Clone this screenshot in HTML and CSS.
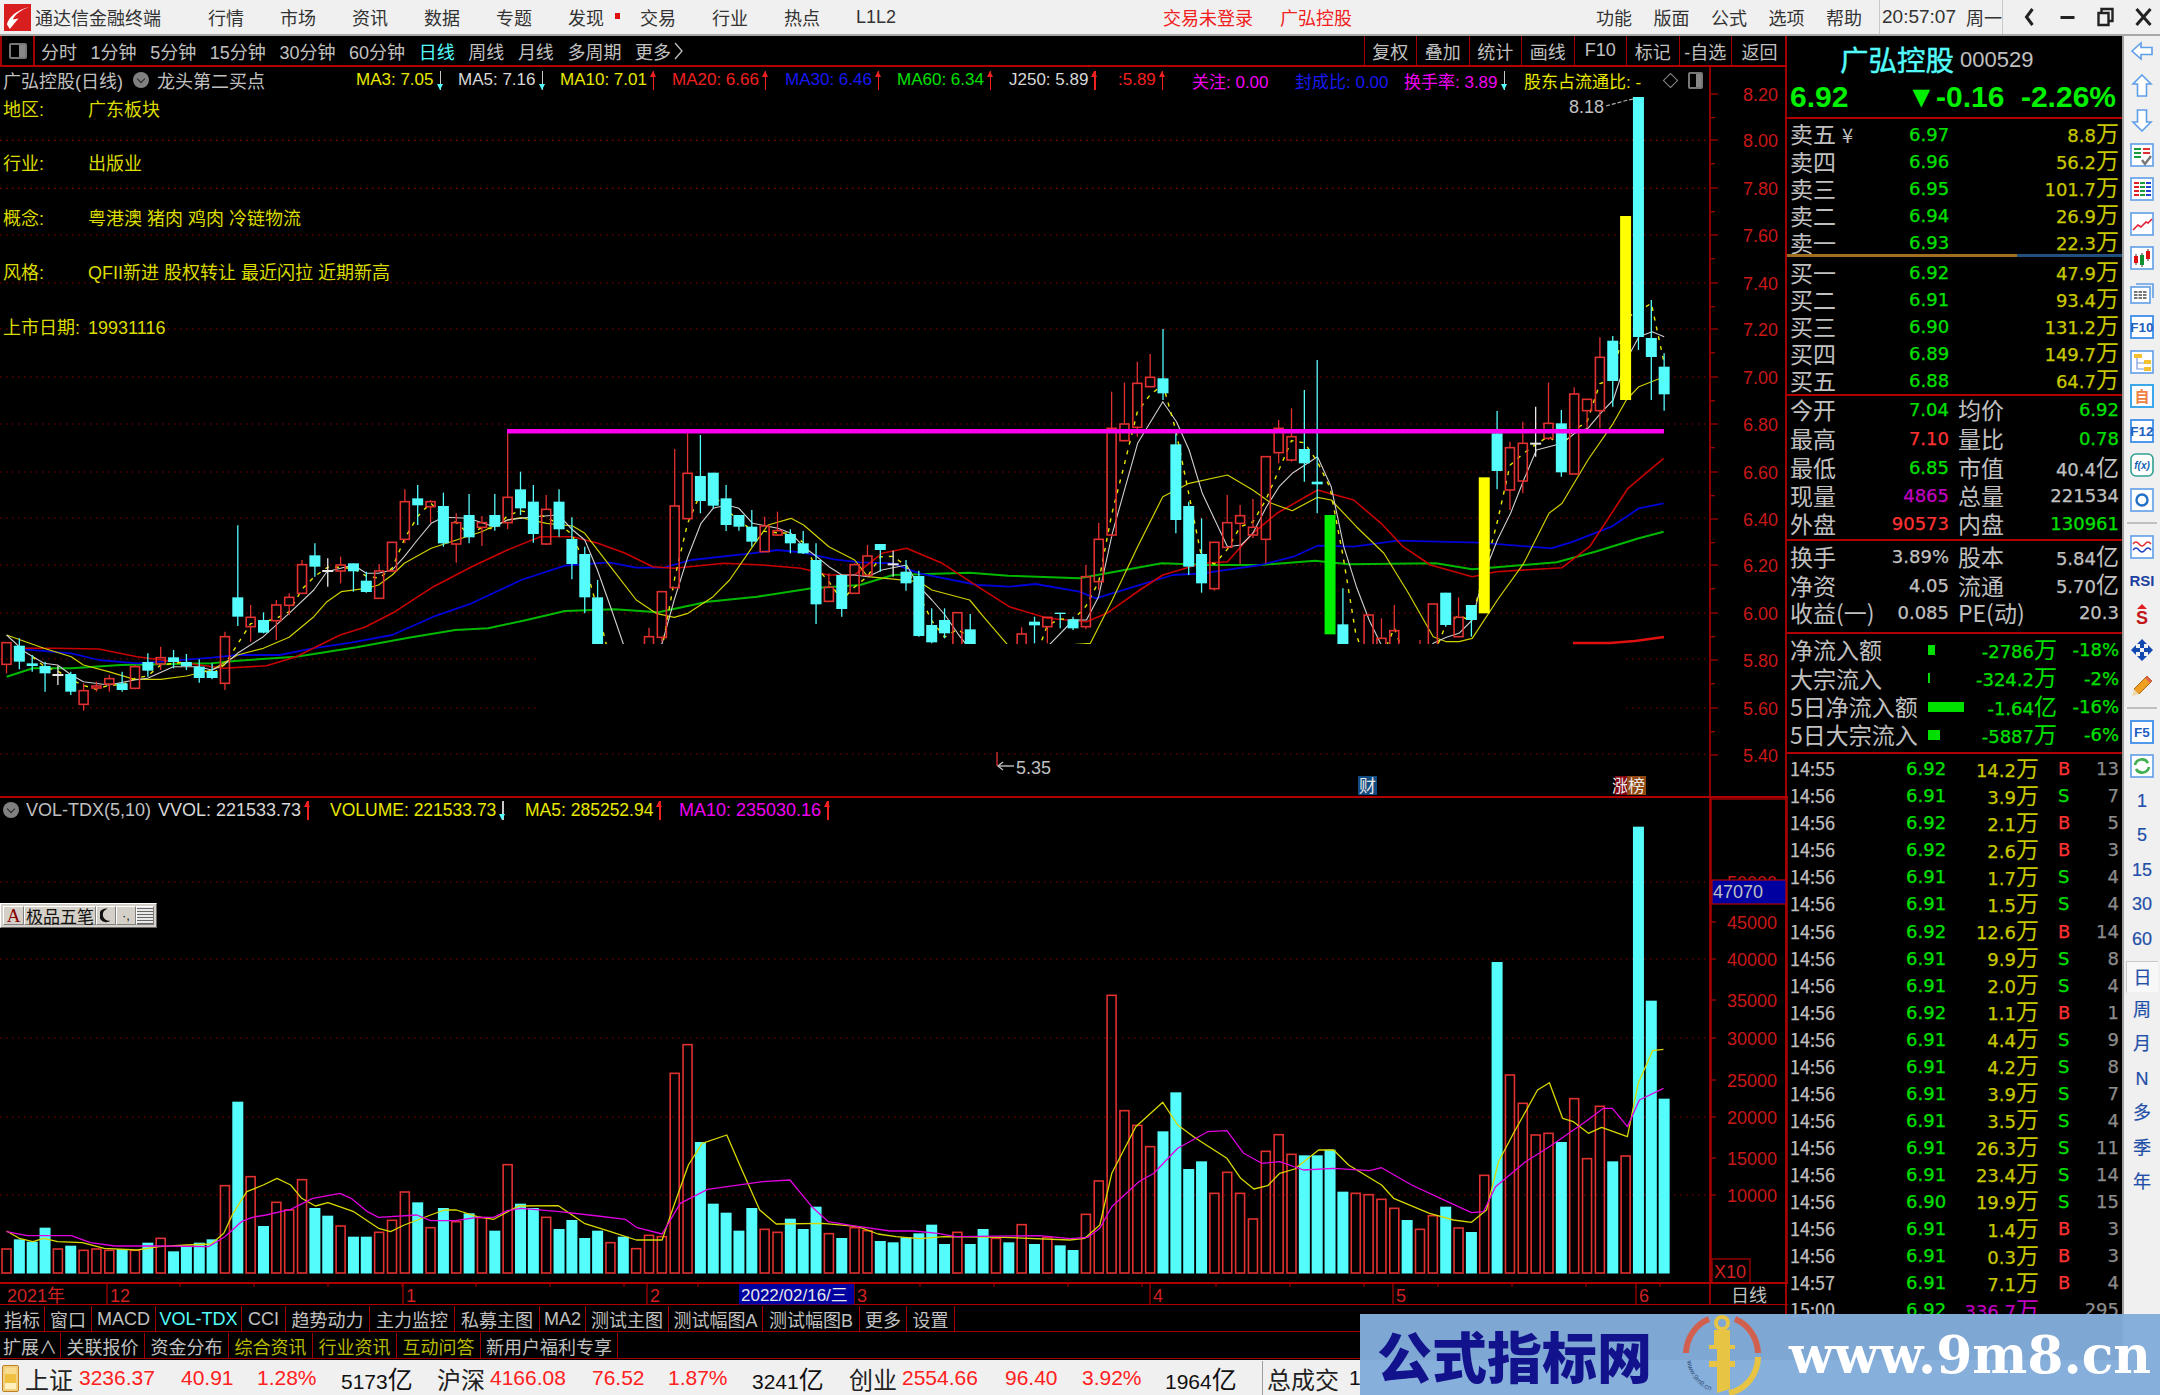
FILE: index.html
```html
<!DOCTYPE html>
<html lang="zh-CN">
<head>
<meta charset="utf-8">
<title>通达信金融终端</title>
<link rel="stylesheet" href="styles.css">
</head>
<body>
<div class="app">
  <header class="titlebar">
    <svg class="logo" viewBox="0 0 28 28"><rect width="28" height="28" fill="#d81e1e"/><path d="M26 3 C18 6 12 10 9 16 L15 15 L6 26 L3 21 C5 13 14 6 26 3 Z" fill="#fff"/></svg>
    <span class="app-name">通达信金融终端</span>
    <nav class="menu">
      <span>行情</span><span>市场</span><span>资讯</span><span>数据</span><span>专题</span>
      <span class="has-dot">发现<i class="dot"></i></span><span>交易</span><span>行业</span><span>热点</span><span>L1L2</span>
    </nav>
    <span class="login">交易未登录</span>
    <span class="login-name">广弘控股</span>
    <nav class="menu-right"><span>功能</span><span>版面</span><span>公式</span><span>选项</span><span>帮助</span></nav>
    <div class="clock"><span>20:57:07</span><span class="week">周一</span></div>
    <div class="winbtns">
      <svg viewBox="0 0 18 20"><path d="M12 2 L6 10 L12 18" fill="none" stroke="#222" stroke-width="3"/></svg>
      <svg viewBox="0 0 18 20"><rect x="2" y="9" width="14" height="3" fill="#222"/></svg>
      <svg viewBox="0 0 18 20"><path d="M5 5 V2 H16 V14 H13 M2 6 H12 V18 H2 Z" fill="none" stroke="#222" stroke-width="2.4"/></svg>
      <svg viewBox="0 0 18 20"><path d="M2 2 L16 18 M16 2 L2 18" fill="none" stroke="#222" stroke-width="3"/></svg>
    </div>
  </header>

  <div class="workspace">
    <section class="chart-col">
      <div class="toolbar">
        <div class="tb-corner"><i></i></div>
        <div class="periods">
          <span>分时</span><span>1分钟</span><span>5分钟</span><span>15分钟</span><span>30分钟</span><span>60分钟</span>
          <span class="on">日线</span><span>周线</span><span>月线</span><span>多周期</span>
          <span class="more">更多<svg viewBox="0 0 9 18"><path d="M1 1 L8 9 L1 17" fill="none" stroke="#c0c0c0" stroke-width="1.3"/></svg></span>
        </div>
        <div class="tb-actions"><span>复权</span><span>叠加</span><span>统计</span><span>画线</span><span>F10</span><span>标记</span><span>-自选</span><span>返回</span></div>
      </div>

      <div class="chart-area">
        <svg id="chart" class="chart-svg" viewBox="0 67 1788 1238" width="1788" height="1238"></svg>
        <div class="pane-price">
          <div class="legend legend-price">
            <span class="gray">广弘控股(日线)</span><i class="drop"></i><span class="gray">龙头第二买点</span>
            <span class="yel">MA3: 7.05<b class="dn"></b></span>
            <span class="wht">MA5: 7.16<b class="dn"></b></span>
            <span class="yel">MA10: 7.01<b class="up"></b></span>
            <span class="red">MA20: 6.66<b class="up"></b></span>
            <span class="blu">MA30: 6.46<b class="up"></b></span>
            <span class="grn">MA60: 6.34<b class="up"></b></span>
            <span class="wht">J250: 5.89<b class="up"></b></span>
            <span class="red">:5.89<b class="up"></b></span>
            <span class="mag">关注: 0.00</span>
            <span class="blu">封成比: 0.00</span>
            <span class="mag">换手率: 3.89<b class="dn"></b></span>
            <span class="yel">股东占流通比: -</span>
            <i class="diamond"></i><i class="mini-square"></i>
          </div>
          <dl class="stock-info">
            <dt>地区:</dt><dd>广东板块</dd>
            <dt>行业:</dt><dd>出版业</dd>
            <dt>概念:</dt><dd>粤港澳 猪肉 鸡肉 冷链物流</dd>
            <dt>风格:</dt><dd>QFII新进 股权转让 最近闪拉 近期新高</dd>
            <dt>上市日期:</dt><dd>19931116</dd>
          </dl>
        </div>
        <div class="pane-vol">
          <div class="legend legend-vol">
            <i class="drop"></i>
            <span class="gray">VOL-TDX(5,10)</span>
            <span class="wht">VVOL: 221533.73<b class="up"></b></span>
            <span class="yel">VOLUME: 221533.73<b class="dn"></b></span>
            <span class="yel">MA5: 285252.94<b class="up"></b></span>
            <span class="mag">MA10: 235030.16<b class="up"></b></span>
          </div>
          <div class="ime">
            <span class="ime-a">A</span><span class="ime-name">极品五笔</span>
            <span class="ime-btn"><svg viewBox="0 0 14 18"><path d="M9 1 A8 8 0 1 0 12 15 A7 7 0 0 1 9 1Z" fill="#111"/></svg></span>
            <span class="ime-btn ime-punct">·,</span>
            <span class="ime-kbd"></span>
          </div>
        </div>
      </div>

      <div class="tabs tabs-one">
        <span>指标</span><span>窗口</span><span>MACD</span><span class="cy">VOL-TDX</span><span>CCI</span><span>趋势动力</span><span>主力监控</span><span>私募主图</span><span>MA2</span><span>测试主图</span><span>测试幅图A</span><span>测试幅图B</span><span>更多</span><span>设置</span>
      </div>
      <div class="tabs tabs-two">
        <span>扩展∧</span><span>关联报价</span><span>资金分布</span><span class="ol">综合资讯</span><span class="ol">行业资讯</span><span class="ol">互动问答</span><span>新用户福利专享</span>
      </div>
    </section>

    <aside class="quote">
      <div class="q-head"><span class="q-name">广弘控股</span><span class="q-code">000529</span></div>
      <div class="q-price"><span>6.92</span><span class="q-chg">▼-0.16</span><span class="q-pct">-2.26%</span></div>

      <div class="book">
        <div class="b-row"><span>卖五<em>¥</em></span><span class="g">6.97</span><span class="o">8.8<i>万</i></span></div>
        <div class="b-row"><span>卖四</span><span class="g">6.96</span><span class="o">56.2<i>万</i></span></div>
        <div class="b-row"><span>卖三</span><span class="g">6.95</span><span class="o">101.7<i>万</i></span></div>
        <div class="b-row"><span>卖二</span><span class="g">6.94</span><span class="o">26.9<i>万</i></span></div>
        <div class="b-row"><span>卖一</span><span class="g">6.93</span><span class="o">22.3<i>万</i></span></div>
      </div>
      <div class="book-ratio"></div>
      <div class="book book-buy">
        <div class="b-row"><span>买一</span><span class="g">6.92</span><span class="o">47.9<i>万</i></span></div>
        <div class="b-row"><span>买二</span><span class="g">6.91</span><span class="o">93.4<i>万</i></span></div>
        <div class="b-row"><span>买三</span><span class="g">6.90</span><span class="o">131.2<i>万</i></span></div>
        <div class="b-row"><span>买四</span><span class="g">6.89</span><span class="o">149.7<i>万</i></span></div>
        <div class="b-row"><span>买五</span><span class="g">6.88</span><span class="o">64.7<i>万</i></span></div>
      </div>

      <div class="stats stats-a">
        <div class="s-row"><span>今开</span><span class="g">7.04</span><span>均价</span><span class="g">6.92</span></div>
        <div class="s-row"><span>最高</span><span class="r">7.10</span><span>量比</span><span class="g">0.78</span></div>
        <div class="s-row"><span>最低</span><span class="g">6.85</span><span>市值</span><span>40.4<i>亿</i></span></div>
        <div class="s-row"><span>现量</span><span class="m">4865</span><span>总量</span><span>221534</span></div>
        <div class="s-row"><span>外盘</span><span class="r">90573</span><span>内盘</span><span class="g">130961</span></div>
      </div>
      <div class="stats stats-b">
        <div class="s-row"><span>换手</span><span>3.89%</span><span>股本</span><span>5.84<i>亿</i></span></div>
        <div class="s-row"><span>净资</span><span>4.05</span><span>流通</span><span>5.70<i>亿</i></span></div>
        <div class="s-row"><span>收益(一)</span><span>0.085</span><span>PE(动)</span><span>20.3</span></div>
      </div>

      <div class="flows">
        <div class="f-row"><span>净流入额</span><span class="f-cell"><b class="f-bar w7"></b></span><span class="g">-2786<i>万</i></span><span class="g">-18%</span></div>
        <div class="f-row"><span>大宗流入</span><span class="f-cell"><b class="f-bar w2"></b></span><span class="g">-324.2<i>万</i></span><span class="g">-2%</span></div>
        <div class="f-row"><span>5日净流入额</span><span class="f-cell"><b class="f-bar w36"></b></span><span class="g">-1.64<i>亿</i></span><span class="g">-16%</span></div>
        <div class="f-row"><span>5日大宗流入</span><span class="f-cell"><b class="f-bar w12"></b></span><span class="g">-5887<i>万</i></span><span class="g">-6%</span></div>
      </div>

      <div class="trades">
        <div class="t-row"><span>14:55</span><span class="g">6.92</span><span class="o">14.2<i>万</i></span><span class="r">B</span><span>13</span></div>
        <div class="t-row"><span>14:56</span><span class="g">6.91</span><span class="o">3.9<i>万</i></span><span class="g">S</span><span>7</span></div>
        <div class="t-row"><span>14:56</span><span class="g">6.92</span><span class="o">2.1<i>万</i></span><span class="r">B</span><span>5</span></div>
        <div class="t-row"><span>14:56</span><span class="g">6.92</span><span class="o">2.6<i>万</i></span><span class="r">B</span><span>3</span></div>
        <div class="t-row"><span>14:56</span><span class="g">6.91</span><span class="o">1.7<i>万</i></span><span class="g">S</span><span>4</span></div>
        <div class="t-row"><span>14:56</span><span class="g">6.91</span><span class="o">1.5<i>万</i></span><span class="g">S</span><span>4</span></div>
        <div class="t-row"><span>14:56</span><span class="g">6.92</span><span class="o">12.6<i>万</i></span><span class="r">B</span><span>14</span></div>
        <div class="t-row"><span>14:56</span><span class="g">6.91</span><span class="o">9.9<i>万</i></span><span class="g">S</span><span>8</span></div>
        <div class="t-row"><span>14:56</span><span class="g">6.91</span><span class="o">2.0<i>万</i></span><span class="g">S</span><span>4</span></div>
        <div class="t-row"><span>14:56</span><span class="g">6.92</span><span class="o">1.1<i>万</i></span><span class="r">B</span><span>1</span></div>
        <div class="t-row"><span>14:56</span><span class="g">6.91</span><span class="o">4.4<i>万</i></span><span class="g">S</span><span>9</span></div>
        <div class="t-row"><span>14:56</span><span class="g">6.91</span><span class="o">4.2<i>万</i></span><span class="g">S</span><span>8</span></div>
        <div class="t-row"><span>14:56</span><span class="g">6.91</span><span class="o">3.9<i>万</i></span><span class="g">S</span><span>7</span></div>
        <div class="t-row"><span>14:56</span><span class="g">6.91</span><span class="o">3.5<i>万</i></span><span class="g">S</span><span>4</span></div>
        <div class="t-row"><span>14:56</span><span class="g">6.91</span><span class="o">26.3<i>万</i></span><span class="g">S</span><span>11</span></div>
        <div class="t-row"><span>14:56</span><span class="g">6.91</span><span class="o">23.4<i>万</i></span><span class="g">S</span><span>14</span></div>
        <div class="t-row"><span>14:56</span><span class="g">6.90</span><span class="o">19.9<i>万</i></span><span class="g">S</span><span>15</span></div>
        <div class="t-row"><span>14:56</span><span class="g">6.91</span><span class="o">1.4<i>万</i></span><span class="r">B</span><span>3</span></div>
        <div class="t-row"><span>14:56</span><span class="g">6.91</span><span class="o">0.3<i>万</i></span><span class="r">B</span><span>3</span></div>
        <div class="t-row"><span>14:57</span><span class="g">6.91</span><span class="o">7.1<i>万</i></span><span class="r">B</span><span>4</span></div>
        <div class="t-row"><span>15:00</span><span class="g">6.92</span><span class="m">336.7<i>万</i></span><span></span><span>295</span></div>
      </div>
    </aside>

    <nav class="iconbar">
      <svg viewBox="0 0 24 24"><path d="M2 12 L11 4 V8.500 H22 V15.500 H11 V20 Z" fill="#fff" stroke="#5f9ee8" stroke-width="1.6"/></svg>
      <svg viewBox="0 0 24 24"><path d="M12 1 L21 10 H16.500 V22 H7.500 V10 H3 Z" fill="#fff" stroke="#5f9ee8" stroke-width="1.6"/></svg>
      <svg viewBox="0 0 24 24"><path d="M12 23 L21 14 H16.500 V2 H7.500 V14 H3 Z" fill="#fff" stroke="#5f9ee8" stroke-width="1.6"/></svg>
      <svg viewBox="0 0 24 24"><rect x="1" y="1" width="22" height="22" fill="#fff" stroke="#5f9ee8" stroke-width="1.6"/><path d="M4 6 H11 M4 10 H11 M4 14 H11" stroke="#1c9a3a" stroke-width="2"/><path d="M13 6 H20 M13 10 H20" stroke="#e03030" stroke-width="2"/><path d="M12 17 L15 21 L21 13" fill="none" stroke="#777" stroke-width="2.4"/></svg>
      <svg viewBox="0 0 24 24"><rect x="1" y="1" width="22" height="22" fill="#fff" stroke="#5f9ee8" stroke-width="1.6"/><path d="M4 6 H9 M4 10 H9 M4 14 H9 M4 18 H9" stroke="#e02020" stroke-width="2"/><path d="M10 6 H15 M10 10 H15 M10 14 H15 M10 18 H15" stroke="#1c9a3a" stroke-width="2"/><path d="M16 6 H21 M16 10 H21 M16 14 H21 M16 18 H21" stroke="#2040d0" stroke-width="2"/></svg>
      <svg viewBox="0 0 24 24"><rect x="1" y="1" width="22" height="22" fill="#fff" stroke="#5f9ee8" stroke-width="1.6"/><path d="M3 18 L8 13 L11 15 L16 10 L18 11 L22 7" fill="none" stroke="#e02030" stroke-width="1.6"/></svg>
      <svg viewBox="0 0 24 24"><rect x="1" y="1" width="22" height="22" fill="#fff" stroke="#5f9ee8" stroke-width="1.6"/><path d="M6 8 V19 M12 7 V21 M18 3 V15" stroke="#333" stroke-width="1"/><rect x="4" y="10" width="4" height="7" fill="#e01010"/><rect x="10" y="9" width="4" height="10" fill="#109030"/><rect x="16" y="5" width="4" height="8" fill="#e01010"/></svg>
      <svg viewBox="0 0 24 24"><path d="M6 3 H23 V17" fill="none" stroke="#5f9ee8" stroke-width="1.6"/><rect x="1" y="6" width="19" height="16" fill="#fff" stroke="#5f9ee8" stroke-width="1.6"/><path d="M4 11 H17 M4 14 H17 M4 17 H17" stroke="#777" stroke-width="2" stroke-dasharray="3.500 1"/></svg>
      <svg viewBox="0 0 24 24"><rect x="1" y="1" width="22" height="22" fill="#fff" stroke="#3f8ee8" stroke-width="1.8"/><text x="12" y="17" class="i-t">F10</text></svg>
      <svg viewBox="0 0 24 24"><rect x="1" y="1" width="22" height="22" fill="#fff" stroke="#5f9ee8" stroke-width="1.6"/><path d="M7 8 V19 H14 M7 13 H14" fill="none" stroke="#7a9ae0" stroke-width="1.2"/><rect x="4" y="4" width="8" height="4" fill="#f4c030"/><rect x="14" y="10" width="7" height="4" fill="#f4c030"/><rect x="14" y="17" width="7" height="4" fill="#f4c030"/></svg>
      <svg viewBox="0 0 24 24"><rect x="1" y="1" width="22" height="22" fill="#fff" stroke="#28a0e8" stroke-width="1.8"/><text x="12" y="18" class="i-t i-o">自</text></svg>
      <svg viewBox="0 0 24 24"><rect x="1" y="1" width="22" height="22" fill="#fff" stroke="#3f8ee8" stroke-width="1.8"/><text x="12" y="17" class="i-t">F12</text></svg>
      <svg viewBox="0 0 24 24"><rect x="1" y="1" width="22" height="22" rx="5" fill="#fff" stroke="#30a090" stroke-width="1.6"/><text x="12" y="16" class="i-t i-f">f(x)</text></svg>
      <svg viewBox="0 0 24 24"><rect x="1" y="1" width="22" height="22" fill="#fff" stroke="#5f9ee8" stroke-width="1.6"/><circle cx="12" cy="12" r="5.500" fill="none" stroke="#2070c8" stroke-width="2.400"/></svg>
      <hr class="ib-sep">
      <svg viewBox="0 0 24 24"><rect x="1" y="1" width="22" height="22" fill="#fff" stroke="#5f9ee8" stroke-width="1.6"/><path d="M3 9 Q6 5 9 9 T15 9 T21 9" fill="none" stroke="#e03030" stroke-width="1.4"/><path d="M3 15 Q6 11 9 15 T15 15 T21 15" fill="none" stroke="#2040c0" stroke-width="1.4"/></svg>
      <svg viewBox="0 0 24 24"><text x="12" y="17" class="i-rsi">RSI</text></svg>
      <svg viewBox="0 0 24 24"><path d="M12 0 L17 5 H7 Z" fill="#e02020"/><text x="12" y="20" class="i-s">S</text></svg>
      <svg viewBox="0 0 24 24"><path d="M12 1 L17 6 H14 V10 H10 V6 H7 Z M12 23 L17 18 H14 V14 H10 V18 H7 Z M1 12 L6 7 V10 H10 V14 H6 V17 Z M23 12 L18 7 V10 H14 V14 H18 V17 Z" fill="#1048b0"/></svg>
      <svg viewBox="0 0 24 24"><path d="M4 16 L17 3 L22 8 L9 21 Z" fill="#f0a020" stroke="#a86810"/><path d="M4 16 L9 21 L2 23 Z" fill="#f0d8a8"/><path d="M17 3 L22 8 L20 10 L15 5 Z" fill="#e06050"/></svg>
      <hr class="ib-sep">
      <svg viewBox="0 0 24 24"><rect x="1" y="1" width="22" height="22" fill="#fff" stroke="#3f8ee8" stroke-width="1.8"/><text x="12" y="17" class="i-t">F5</text></svg>
      <svg viewBox="0 0 24 24"><rect x="1" y="1" width="22" height="22" fill="#fff" stroke="#5f9ee8" stroke-width="1.6"/><path d="M5 11 A7 7 0 0 1 18 9 M19 13 A7 7 0 0 1 6 15" fill="none" stroke="#40b050" stroke-width="2.600"/></svg>
      <span class="ib-t">1</span><span class="ib-t">5</span><span class="ib-t">15</span><span class="ib-t">30</span><span class="ib-t">60</span>
      <span class="ib-t ib-on">日</span><span class="ib-t">周</span><span class="ib-t">月</span><span class="ib-t">N</span><span class="ib-t">多</span><span class="ib-t">季</span><span class="ib-t">年</span>
    </nav>
  </div>

  <footer class="statusbar">
    <i class="sb-icon"></i>
    <span>上证</span><span class="up-n">3236.37</span><span class="up-n">40.91</span><span class="up-n">1.28%</span><span class="amt">5173<i>亿</i></span>
    <span>沪深</span><span class="up-n">4166.08</span><span class="up-n">76.52</span><span class="up-n">1.87%</span><span class="amt">3241<i>亿</i></span>
    <span>创业</span><span class="up-n">2554.66</span><span class="up-n">96.40</span><span class="up-n">3.92%</span><span class="amt">1964<i>亿</i></span>
    <span class="sb-total">总成交</span><span class="amt">1</span>
  </footer>

  <aside class="watermark">
    <span class="wm-cn">公式指标网</span>
    <svg class="wm-logo" viewBox="0 0 78 80">
      <path d="M3 38 A36 38 0 0 1 26 4 M52 4 A36 38 0 0 1 75 38" fill="none" stroke="#d2604e" stroke-width="6"/>
      <path d="M75 42 A36 37 0 0 1 46 78" fill="none" stroke="#e8c444" stroke-width="6"/>
      <circle cx="39" cy="8" r="6" fill="none" stroke="#e8c444" stroke-width="4"/>
      <path d="M31 15 H47 V30 H52 V34 H47 V46 H52 V52 H47 V74 L34 78 V52 H26 V46 H34 V34 H26 V30 H31 Z" fill="#e8c444"/>
      <path id="wm-arc" d="M4 46 A36 36 0 0 0 32 77" fill="none"/>
      <text class="wm-small"><textPath href="#wm-arc">www.9m8.cn</textPath></text>
    </svg>
    <span class="wm-url">www.9m8.cn</span>
  </aside>
</div>
<script src="chart.js"></script>
</body>
</html>
```

FILE: styles.css
```css
* { box-sizing: border-box; }
html, body { margin: 0; padding: 0; background: #000; }
body { font-family: "Liberation Sans", "Noto Sans CJK SC", sans-serif; font-size: 18px; color: #c0c0c0; }
i, em { font-style: normal; }

.app { position: relative; width: 2160px; height: 1395px; overflow: hidden; display: flex; flex-direction: column; background: #000; }

/* title bar */
.titlebar { height: 36px; flex: none; display: flex; align-items: center; background: #f0f0f0; border-bottom: 2px solid #a8a8a8; color: #333; padding-left: 4px; }
.logo { width: 27px; height: 27px; flex: none; }
.app-name { width: 173px; margin-left: 4px; flex: none; white-space: nowrap; }
.menu { display: flex; align-items: center; gap: 36px; flex: none; width: 955px; }
.menu span { width: 36px; white-space: nowrap; }
.has-dot { position: relative; }
.dot { position: absolute; left: 47px; top: 9px; width: 5px; height: 6px; background: #e01010; }
.login { color: #f02020; width: 117px; flex: none; white-space: nowrap; }
.login-name { color: #f02020; width: 316px; flex: none; white-space: nowrap; }
.menu-right { display: flex; gap: 21.500px; width: 283px; flex: none; white-space: nowrap; }
.clock { width: 124px; flex: none; height: 100%; display: flex; align-items: center; border-left: 1px solid #c8c8c8; border-right: 1px solid #c8c8c8; padding-left: 2px; font-size: 19px; white-space: nowrap; }
.week { margin-left: 10px; font-size: 18px; }
.winbtns { display: flex; gap: 19px; padding-left: 17px; flex: none; }
.winbtns svg { width: 19px; height: 20px; }

/* workspace */
.workspace { height: 1324px; flex: none; display: flex; }
.chart-col { width: 1787px; flex: none; display: flex; flex-direction: column; border-right: 2px solid #a00000; }

.toolbar { height: 31px; flex: none; display: flex; align-items: center; border-bottom: 2px solid #b00000; width: 1787px; }
.tb-corner { width: 35px; height: 100%; flex: none; border-left: 2px solid #a00000; border-right: 2px solid #a00000; display: flex; align-items: center; justify-content: center; }
.tb-corner i { width: 18px; height: 16px; border: 2px solid #777; border-radius: 2px; background: linear-gradient(90deg, #000 55%, #888 55%); }
.periods { display: flex; gap: 13.6px; padding-left: 6px; flex: 1; white-space: nowrap; }
.periods .on { color: #54fcfc; }
.more { display: inline-flex; align-items: center; gap: 3px; }
.more svg { width: 9px; height: 18px; }
.tb-actions { display: flex; height: 100%; }
.tb-actions span { width: 52.500px; border-left: 1.5px solid #a00000; display: flex; align-items: center; justify-content: center; white-space: nowrap; }
.tb-actions span:last-child { width: 56px; }

.chart-area { position: relative; height: 1238px; flex: none; width: 1788px; }
.chart-svg { position: absolute; left: 0; top: 0; display: block; }
.chart-svg text { font-family: "Liberation Sans", "Noto Sans CJK SC", sans-serif; }
.pane-price { position: relative; height: 730px; }
.pane-vol { position: relative; height: 486px; }

.legend { display: grid; align-items: center; padding-left: 3px; height: 25px; font-size: 17px; white-space: nowrap; }
.legend span { display: flex; align-items: center; }
.legend-price { grid-template-columns: 130px 24px 199px 102px 102px 112px 113px 112px 112px 109px 74px 103px 109px 120px 138px 26px 14px; }
.legend-vol { grid-template-columns: 23px 132px 172px 195px 154px 170px; height: 26px; font-size: 18px; }
.legend-vol .yel { font-size: 17.500px; }
.gray { color: #c0c0c0; font-size: 18px; }
.yel { color: #e8e800; } .wht { color: #d8d8d8; } .red { color: #f02020; } .blu { color: #1818f0; } .grn { color: #00e000; } .mag { color: #f000f0; }
.drop { width: 16px; height: 16px; border-radius: 50%; background: #808080; position: relative; }
.drop::after { content: ""; position: absolute; left: 5px; top: 4px; width: 5px; height: 5px; border-right: 1.5px solid #222; border-bottom: 1.5px solid #222; transform: rotate(45deg); }
.diamond { width: 11px; height: 11px; border: 1px solid #888; transform: rotate(45deg); margin-left: 3px; }
.mini-square { width: 15px; height: 17px; border: 2px solid #777; border-radius: 2px; background: linear-gradient(90deg, #000 55%, #888 55%); }
.up, .dn { display: inline-block; position: relative; width: 8px; height: 19px; margin-left: 3px; flex: none; }
.up::before, .dn::before { content: ""; position: absolute; left: 3px; width: 1.5px; top: 0; bottom: 0; }
.up::after, .dn::after { content: ""; position: absolute; left: 0; width: 0; height: 0; border-left: 3.7px solid transparent; border-right: 3.7px solid transparent; }
.up::before { background: #f02020; } .up::after { top: 0; border-bottom: 6px solid #f02020; }
.dn::before { background: #c8c8c8; } .dn::after { bottom: 0; border-top: 6px solid #54fcfc; }

.stock-info { display: grid; grid-template-columns: 88px auto; justify-content: start; margin: 0; padding-left: 3px; row-gap: 18.4px; line-height: 36px; font-size: 18px; color: #dcdc00; }
.stock-info dt { width: 85px; white-space: nowrap; }
.stock-info dd { margin: 0 0 0 -3px; white-space: nowrap; }

.ime { position: absolute; left: 0; top: 106px; width: 157px; height: 25px; display: flex; align-items: stretch; padding: 2px; background: #d4d0c8; border: 1px solid; border-color: #fff #666 #666 #fff; color: #111; }
.ime > span { display: flex; align-items: center; justify-content: center; border: 1px solid; border-color: #fff #808080 #808080 #fff; }
.ime-a { width: 21px; color: #8a0000; font-family: "Liberation Serif", serif; font-size: 19px; }
.ime-name { width: 72px; font-size: 17px; white-space: nowrap; }
.ime-btn { width: 20px; }
.ime-btn svg { width: 12px; height: 17px; }
.ime-punct { font-size: 13px; line-height: 1; }
.ime-kbd { width: 18px; background: repeating-linear-gradient(0deg, #666 0 1px, #e8e8e8 1px 3px); }

.tabs { display: grid; height: 27px; flex: none; border-bottom: 1.5px solid #a00000; font-size: 18px; align-items: stretch; padding-top: 1px; }
.tabs span { display: flex; align-items: center; justify-content: center; border-right: 1.5px solid #a00000; white-space: nowrap; }
.tabs-one { grid-template-columns: 45px 47px 64px 86px 44px 84px 85px 85px 46px 83px 94px 97px 47px 48px; }
.tabs-two { grid-template-columns: 61px 84px 84px 84px 84px 84px 137px; }
.tabs .cy { color: #54fcfc; }
.tabs .ol { color: #b8b800; }

/* quote panel */
.quote { width: 335px; flex: none; display: flex; flex-direction: column; padding: 0 3px; font-family: "DejaVu Sans", "Noto Sans CJK SC", sans-serif; font-size: 18px; line-height: 27px; -webkit-text-stroke: 0.25px; background: #000; }
.quote i { font-size: 23px; font-family: "Noto Sans CJK SC", sans-serif; -webkit-text-stroke: 0; }
.quote > div > div > span:first-child, .q-head { font-family: "Noto Sans CJK SC", "DejaVu Sans", sans-serif; }
.g { color: #00e000; } .r { color: #ff3232; } .o { color: #c8c800; } .m { color: #c000c0; }

.q-head { height: 44px; margin: 0 -3px; padding-left: 53px; display: flex; align-items: center; -webkit-text-stroke: 0; }
.q-name { color: #54fcfc; font-size: 28.500px; -webkit-text-stroke: 0.4px #54fcfc; white-space: nowrap; }
.q-code { font-family: "Liberation Sans", sans-serif; font-size: 22px; margin-left: 6px; padding-top: 3px; }
.q-price { height: 39px; margin: 0 -3px; padding: 0 6px 4px 3px; display: flex; align-items: center; border-bottom: 2px solid #b00000; color: #00f000; font-family: "Liberation Sans", sans-serif; font-size: 30px; font-weight: 700; -webkit-text-stroke: 0; }
.q-chg { margin-left: 58px; }
.q-pct { margin-left: auto; }

.book { display: flex; flex-direction: column; }
.b-row { display: grid; grid-template-columns: 119px 50px 1fr; height: 27.050px; align-items: center; }
.b-row > span:first-child, .s-row > span:nth-child(1), .s-row > span:nth-child(3), .f-row > span:first-child { font-family: "Noto Sans CJK SC", sans-serif; font-size: 23px; -webkit-text-stroke: 0; white-space: nowrap; }
.b-row em { margin-left: 6px; font-size: 20px; }
.b-row > span:last-child { text-align: right; }
.book-ratio { height: 2.500px; margin: 0 -3px 0.5px; flex: none; background: linear-gradient(90deg, #a07020 0 230px, #205080 230px); }
.book-buy { height: 138.500px; border-bottom: 2px solid #b00000; margin: 0 -3px; padding: 0 3px; }

.stats { display: flex; flex-direction: column; margin: 0 -3px; padding: 0 3px; border-bottom: 2px solid #b00000; }
.stats-a { height: 145px; }
.stats-b { height: 93px; padding-top: 1px; }
.s-row { display: grid; grid-template-columns: 46px 113px 55px 1fr; height: 28.400px; align-items: center; white-space: nowrap; }
.s-row > span:nth-child(2), .s-row > span:nth-child(4) { text-align: right; }
.s-row > span:nth-child(3) { padding-left: 9px; }

.flows { display: flex; flex-direction: column; height: 120px; margin: 0 -3px; padding: 1px 3px 0; border-bottom: 2px solid #b00000; }
.f-row { display: grid; grid-template-columns: 138px 40px 89px 62px; height: 28.400px; align-items: center; white-space: nowrap; }
.f-row > span:nth-child(3), .f-row > span:nth-child(4) { text-align: right; }
.f-cell { display: flex; align-items: center; }
.f-bar { display: block; height: 10px; background: #00e000; }
.w2 { width: 2px; } .w7 { width: 7px; } .w12 { width: 12px; } .w36 { width: 36px; }

.trades { display: flex; flex-direction: column; flex: 1; }
.t-row { display: grid; grid-template-columns: 116px 50px 83px 31px 1fr; height: 27.050px; flex: none; align-items: center; white-space: nowrap; }
.t-row > span:nth-child(3) { text-align: right; }
.t-row > span:nth-child(4) { padding-left: 19px; }
.t-row > span:nth-child(5) { text-align: right; color: #8c8c8c; }

/* icon bar */
.iconbar { width: 38px; flex: none; display: flex; flex-direction: column; align-items: center; gap: 10.500px; padding-top: 3px; background: #f0f0f0; border-left: 2px solid #a0a0a0; }
.iconbar svg { width: 24px; height: 24px; flex: none; }
.ib-sep { width: 30px; height: 2px; margin: 0; border: 0; background: #c0c0c0; flex: none; }
.ib-t { height: 24px; flex: none; color: #1f4fa8; font-size: 18px; line-height: 24px; -webkit-text-stroke: 0.2px; }
.ib-on { width: 32px; height: 32px; line-height: 32px; margin: 0 -1px -6px; text-align: center; border: 1px solid #c8c8c8; border-right: 0; border-bottom-color: #f0f0f0; background: #f8f8f8; }
.i-t { font-family: "Liberation Sans", sans-serif; font-size: 13.500px; font-weight: 700; fill: #2060c0; text-anchor: middle; }
.i-o { fill: #f08040; font-size: 15px; font-family: "Noto Sans CJK SC", sans-serif; }
.i-f { fill: #1060b0; font-size: 10px; font-style: italic; }
.i-rsi { font-family: "Liberation Sans", sans-serif; font-size: 15px; font-weight: 700; fill: #2040a0; text-anchor: middle; }
.i-s { font-family: "Liberation Sans", sans-serif; font-size: 18px; font-weight: 700; fill: #c01818; text-anchor: middle; }

/* status bar */
.statusbar { height: 35px; flex: none; display: grid; grid-template-columns: 23px 54px 102px 76px 84px 96px 53px 102px 76px 84px 97px 53px 103px 77px 83px 101px 83px 30px; align-items: center; padding-left: 2px; background: #f0f0f0; color: #222; font-size: 24px; white-space: nowrap; }
.sb-icon { width: 17px; height: 27px; border: 1px solid #c08020; border-radius: 2px; background: linear-gradient(#f8dc90 0 30%, #f0c040 30% 70%, #fff0c0 70%); box-shadow: inset 0 0 0 2px #f0d080; }
.up-n { color: #ff2020; font-size: 21px; }
.amt { color: #111; font-size: 21px; }
.amt i { font-size: 25px; }
.sb-total { border-left: 1px solid #a0a0a0; padding-left: 4px; margin-left: -4px; }

/* watermark */
.watermark { position: absolute; left: 1360px; top: 1314px; width: 800px; height: 81px; background: rgba(130, 172, 218, 0.97); display: flex; align-items: center; padding-left: 17px; }
.wm-cn { width: 306px; flex: none; color: #12128c; font-family: "Noto Sans CJK SC", sans-serif; font-weight: 900; font-size: 55px; line-height: 1; white-space: nowrap; }
.wm-logo { width: 78px; height: 80px; flex: none; }
.wm-small { font-family: "Liberation Sans", sans-serif; font-size: 7px; fill: #33507a; }
.wm-url { margin-left: 28px; color: #fff; font-family: "DejaVu Serif", serif; font-weight: 700; font-size: 52px; line-height: 1; white-space: nowrap; }

/* chart */
.t-axis { font-size: 18px; fill: #d02020; }
.t-ax-num { font-size: 18px; fill: #c81818; }
.t-white { font-size: 18px; fill: #c0c0c0; }
.t-date { font-size: 17px; fill: #e8e8e8; }
.t-badge { font-size: 17px; fill: #e8e8e8; }
```

FILE: chart.js
```js
// Draws the K-line and volume panes. Coordinates are page pixels (viewBox starts at y = 67).
(function () {
  var svg = document.getElementById('chart');
  var out = [];
  var RED = '#e03030', CY = '#54fcfc', AX = '#b00000', GRID = '#8c0000';
  var X = function (i) { return 6.5 + 12.85 * i; };
  var y7 = function (z) { return 400 + z / 3; };
  var y8 = function (z) { return 300 + z / 3; };

  // [kind, bodyTop, bodyBottom, high, low] in scan units; kind r = up, c = down, w = doji, g/y = marker bars
  var k7 = [['r',728,793,728,820],['c',737,785,715,808],['c',790,798,765,815],['c',798,820,785,875],['w',822,825,798,855],['c',822,875,815,885],['r',872,913,850,932],['r',858,864,845,875],['r',836,852,825,875],['c',850,870,815,875],['r',800,865,795,868],['c',786,812,760,830],['r',773,792,740,810],['c',772,786,750,805],['c',786,798,762,810],['c',800,834,778,848],['c',813,834,790,838],['r',710,850,695,870],['c',592,650,376,678],['r',652,680,615,725],['c',660,698,637,700],['r',615,662,600,720],['r',592,616,580,645],['r',494,580,480,582],['c',466,500,430,530],['w',510,513,475,560],['r',495,513,470,550],['c',490,514,490,575],['c',542,576,515,578],['r',513,595,492,597],['r',427,513,427,515],['r',305,418,268,430],['c',295,316,255,375],['r',305,320,300,368],['c',318,430,278,440],['r',368,432,340,488],['c',345,412,282,430],['r',368,382,348,438],['c',345,380,282,392],['r',292,368,100,388],['c',268,325,215,345],['c',305,402,255,428],['r',328,432,285,435],['c',305,388,268,410],['c',417,492,352,538],['c',462,592,440,640],['c',592,800,540,800],null,null,null,['r',710,800,683,800],['r',575,712,575,725],['r',318,563,147,563],['r',220,356,100,356],['c',228,303,105,340],['c',218,317,218,325],['c',295,375,255,393],['c',345,380,345,392],['c',380,425,330,440],['r',378,455,350,457],['r',392,405,335,408],['c',402,430,388,460],['c',430,460,393,462],['c',480,613,430,672],['r',562,604,520,605],['c',525,627,525,650],['r',494,580,490,582]];
  var k8 = [['r',768,826,735,830],['c',732,750,732,815],['w',790,795,752,830],['c',815,850,780,872],['c',828,1008,812,1010],['c',975,1027,925,1030],['c',960,1000,925,1015],['r',938,1100,938,1100],['c',988,1100,942,1100],null,null,null,['r',1002,1100,982,1100],['c',965,976,950,1030],['r',952,980,950,1030],['c',938,942,938,985],['c',958,985,950,990],['r',830,980,795,988],['r',718,845,668,870],['r',385,705,275,710],['r',372,422,248,425],['r',250,382,185,410],['r',232,260,162,262],['c',235,280,87,300],['c',433,660,400,700],['c',618,800,605,825],['c',762,850,655,878],['r',727,866,727,872],['r',668,742,585,742],['r',647,670,615,792],['r',682,705,597,715],['r',470,718,470,790],['r',385,458,360,490],['r',410,480,325,485],['c',447,490,270,545],['c',545,553,180,640],['g',645,1003,645,1003],['c',973,1100,865,1100],null,['r',945,1100,945,1100],['r',1015,1100,955,1100],['r',992,1100,915,1100],null,['r',1040,1100,1020,1100],['r',912,1100,912,1100],['c',878,975,878,980],['r',952,1010,892,1012],['c',915,960,915,1010],['y',532,940,532,940],['c',400,513,333,568],['r',443,570,425,630],['r',430,543,365,580],['w',428,432,320,470],['r',370,415,248,420],['c',370,517,330,530],['r',282,522,262,522],['r',298,332,298,385],['r',172,332,112,385],['c',122,243,108,320],['y',-252,300,-252,300],['c',-609,111,-609,150],['c',114,171,0,300],['c',200,283,160,332]];

  var candles = [];
  k7.forEach(function (k) { candles.push(k && [k[0], y7(k[1]), y7(k[2]), y7(k[3]), y7(k[4])]); });
  k8.forEach(function (k) { candles.push(k && [k[0], y8(k[1]), y8(k[2]), y8(k[3]), y8(k[4])]); });

  // [kind, scanTop] for every session, bottom is shared
  var v7 = 'r1377 c1348 c1355 c1313 r1377 c1367 r1381 r1377 r1381 c1377 r1381 c1358 r1345 c1384 c1367 c1358 c1348 r1187 c935 r1160 c1308 r1237 r1260 r1169 c1254 c1277 r1308 c1340 c1340 r1327 r1291 r1206 c1237 r1313 c1254 r1295 c1270 r1283 c1322 r1124 c1241 c1254 r1282 c1317 c1290 c1344 c1322 r1358 c1340 r1376 r1336 r1340 r850 r764 c1056 c1241 c1268 c1322 c1254 r1318 r1327 c1286 c1317 c1250 r1331 c1344 r1313';
  var v10 = 'r1322 c1353 c1357 c1342 c1330 c1304 c1362 r1327 c1362 c1317 r1345 c1357 r1304 c1362 r1342 c1366 c1380 r1273 r1173 r616 r962 r1006 r1070 c1024 c907 c1137 c1114 r1210 r1147 r1210 r1287 r1084 r1034 r1093 c1096 c1096 c1079 c1205 r1210 r1214 r1228 r1255 c1290 r1318 r1277 c1250 r1314 c1326 r1156 c516 r855 r940 r1035 r1030 c1056 r926 r1106 r949 c1114 r1098 c110 c632 c926';
  var vols = (v7 + ' ' + v10).split(' ').map(function (s) { return [s[0], 790 + (+s.slice(1)) / 3]; });

  function line(pts, color, w, extra) {
    out.push('<polyline fill="none" stroke="' + color + '" stroke-width="' + w + '" stroke-linejoin="round" ' + (extra || '') + ' points="' + pts.map(function (p) { return p[0].toFixed(1) + ',' + p[1].toFixed(1); }).join(' ') + '"/>');
  }
  function seg(x1, y1, x2, y2, color, w, extra) {
    out.push('<line x1="' + x1 + '" y1="' + y1 + '" x2="' + x2 + '" y2="' + y2 + '" stroke="' + color + '" stroke-width="' + w + '" ' + (extra || '') + '/>');
  }
  function rect(x, y, w, h, attrs) {
    out.push('<rect x="' + x + '" y="' + y + '" width="' + w + '" height="' + h + '" ' + attrs + '/>');
  }
  function text(x, y, s, cls, extra) {
    out.push('<text x="' + x + '" y="' + y + '" class="' + cls + '" ' + (extra || '') + '>' + s + '</text>');
  }
  function pair(a, fx, fy) {
    var r = [];
    for (var i = 0; i < a.length; i += 2) r.push([fx(a[i]), fy(a[i + 1])]);
    return r;
  }
  var fx7 = function (z) { return z / 1.823; };
  var fx8 = function (z) { return 860 + z / 1.823; };
  var fx9 = fx7;
  var fx10 = function (z) { return 860 + z / 1.668; };
  var fyv = function (z) { return 790 + z / 3; };
  function ma(a7, a8) { return pair(a7, fx7, y7).concat(pair(a8, fx8, y8)); }
  function vma(a9, a10) { return pair(a9, fx9, fyv).concat(pair(a10, fx10, fyv)); }

  // --- price grid
  [140.3, 188.3, 235, 283, 329, 377, 424, 472, 518, 565, 613, 659, 708, 754].forEach(function (y) {
    seg(0, y, 1710, y, GRID, 1.2, 'stroke-dasharray="1.5 4.5"');
  });

  // --- averages under the candles
  var green = ma([12,830,60,805,130,805,220,795,386,790,433,782,540,770,650,742,750,712,830,690,890,685,960,660,1030,633,1120,628,1200,637,1290,605,1380,590,1480,565,1568,555],
    [60,825,200,818,270,827,400,835,550,790,640,795,730,795,830,782,890,793,1050,790,1116,808,1270,787,1340,755,1420,715,1465,695]);
  var blue = ma([45,748,130,760,180,780,250,790,386,773,433,765,510,765,570,745,640,728,715,705,790,650,860,610,950,540,1030,497,1110,487,1160,503,1210,503,1260,480,1370,460,1418,450,1465,458,1520,478,1568,487],
    [60,790,108,820,215,855,272,860,320,852,400,875,430,895,500,860,570,825,624,820,730,795,790,770,834,737,900,740,980,722,1130,728,1260,745,1300,725,1370,680,1420,625,1465,610]);
  var red = ma([45,745,100,745,180,747,250,770,340,790,408,805,486,797,540,770,620,705,665,682,720,635,790,560,860,500,925,450,985,410,1044,410,1090,430,1140,460,1190,500,1229,505,1320,490,1390,495,1460,505,1510,525,1558,525],
    [40,760,85,745,150,790,215,860,272,920,342,955,413,965,450,940,510,870,552,825,624,790,670,785,716,700,760,640,834,570,900,600,950,670,990,740,1040,795,1116,830,1160,815,1280,803,1330,740,1400,565,1465,475]);
  var yellow = ma([12,705,80,745,130,770,152,795,198,815,245,838,293,838,340,828,386,810,433,765,480,745,527,712,572,650,596,605,622,575,668,565,690,555,715,525,737,490,786,445,832,420,878,395,925,360,950,353,996,370,1044,378,1066,400,1113,500,1160,600,1196,640,1229,652,1254,640,1300,590,1330,540,1372,440,1400,375,1442,355,1465,375,1511,440,1558,480],
    [14,830,108,845,131,870,200,900,225,950,272,1040,340,1040,420,1030,460,900,506,740,552,590,600,550,670,525,716,570,750,610,788,632,834,592,859,600,905,680,955,760,1000,880,1045,1010,1069,1025,1092,1025,1116,1015,1162,900,1210,790,1256,640,1280,610,1327,480,1373,370,1397,300,1420,260,1466,230]);
  var white = ma([12,705,45,755,80,790,105,795,130,825,152,845,198,855,245,840,269,835,316,800,362,800,386,810,408,795,433,760,480,710,527,640,572,570,596,515,644,495,668,520,690,520,715,510,737,470,761,420,786,370,808,352,854,355,901,380,925,360,972,350,1018,345,1044,390,1066,420,1089,510,1113,620,1136,730,1160,800,1207,730,1229,600,1254,470,1278,370,1300,325,1325,315,1347,325,1372,370,1418,385,1442,400,1465,440,1489,470,1511,500,1535,525,1558,525],
    [14,830,40,810,85,795,108,860,131,900,155,945,178,1000,225,1100,272,1140,342,1040,389,960,413,960,435,890,460,700,506,430,552,305,577,365,600,450,624,580,670,740,695,735,716,700,741,620,764,560,788,520,834,470,859,560,882,740,905,860,928,960,952,1040,1000,1100,1045,1030,1069,1012,1092,1000,1116,960,1138,820,1162,720,1186,640,1210,540,1233,450,1256,440,1280,430,1303,400,1327,385,1350,340,1373,300,1397,180,1420,110,1444,95,1466,110]);
  line(green, '#00b800', 2);
  line(blue, '#0000d8', 1.8);
  line(red, '#c80000', 1.6);
  line(yellow, '#d0d000', 1.2);
  line(white, '#d0d0d0', 1.1);

  // --- 3-day average, computed from closes
  var closes = candles.map(function (c) { return c ? (c[0] === 'c' ? c[2] : c[1]) : 720; });
  var ma3 = [];
  for (var m = 2; m < closes.length; m++) ma3.push([X(m), (closes[m] + closes[m - 1] + closes[m - 2]) / 3]);
  line(ma3, '#e8e800', 1.4, 'stroke-dasharray="4 6"');

  // --- candles
  candles.forEach(function (c, i) {
    if (!c) return;
    var x = X(i), kind = c[0], top = c[1], bot = c[2], hi = c[3], lo = c[4];
    if (kind === 'r') {
      if (hi < top) seg(x, hi, x, top, RED, 1.3);
      if (lo > bot) seg(x, bot, x, lo, RED, 1.3);
      rect(x - 4.5, top, 9, bot - top, 'fill="none" stroke="' + RED + '" stroke-width="1.6"');
    } else if (kind === 'c') {
      seg(x, hi, x, lo, CY, 1.3);
      rect(x - 5.5, top, 11, bot - top, 'fill="' + CY + '"');
    } else if (kind === 'w') {
      seg(x, hi, x, lo, '#e8e8e8', 1.3);
      seg(x - 5.5, top + 1, x + 5.5, top + 1, '#e8e8e8', 2);
    } else {
      rect(x - 5.5, top, 11, bot - top, 'fill="' + (kind === 'g' ? '#00f000' : '#ffff00') + '"');
    }
  });

  // --- level line, lower mask, long-term average
  rect(507, 429, 1157, 4.5, 'fill="#ff00f0"');
  rect(537, 644, 1085, 106, 'fill="#000"');
  line([[1573, 643], [1610, 643], [1635, 641], [1664, 637]], '#e01010', 2.6);

  // --- extreme labels
  text(1569, 113, '8.18', 't-white');
  line([[1606, 106], [1628, 100], [1634, 99]], '#b0b0b0', 1.2, 'stroke-dasharray="4 2"');
  seg(997, 752, 997, 766, RED, 1.3);
  line([[1003, 762], [998, 766], [1003, 770]], '#c0c0c0', 1.4);
  seg(998, 766, 1014, 766, '#c0c0c0', 1.4);
  text(1016, 774, '5.35', 't-white');

  // --- event badges
  rect(1358, 776, 19, 19, 'fill="#104a80"');
  text(1359, 792, '财', 't-badge');
  rect(1615, 776, 12, 19, 'fill="#800010"');
  text(1612, 792, '涨', 't-badge');
  rect(1627, 776, 19, 19, 'fill="#904810"');
  text(1628, 792, '榜', 't-badge');

  // --- price axis
  seg(1710, 67, 1710, 1305, AX, 1.6);
  [['8.20', 94], ['8.00', 140], ['7.80', 188], ['7.60', 235], ['7.40', 283], ['7.20', 329], ['7.00', 377], ['6.80', 424], ['6.60', 472], ['6.40', 519], ['6.20', 565], ['6.00', 613], ['5.80', 660], ['5.60', 708], ['5.40', 755]].forEach(function (t) {
    text(1743, t[1] + 6.5, t[0], 't-ax-num');
    seg(1711, t[1], 1718, t[1], AX, 1.2);
    if (t[1] < 750) seg(1711, t[1] + 23.7, 1715, t[1] + 23.7, AX, 1.2);
  });

  seg(0, 797, 1788, 797, AX, 2);
  rect(1711, 799, 76, 484, 'fill="none" stroke="' + AX + '" stroke-width="1.4"');

  // --- volume pane
  [882, 959, 1038, 1117, 1195].forEach(function (y) {
    seg(0, y, 1710, y, GRID, 1.2, 'stroke-dasharray="1.5 4.5"');
  });
  vols.forEach(function (v, i) {
    var x = X(i), top = v[1];
    if (v[0] === 'r') rect(x - 4.5, top, 9, 1273 - top, 'fill="none" stroke="' + RED + '" stroke-width="1.6"');
    else rect(x - 5.5, top, 11, 1273.5 - top, 'fill="' + CY + '"');
  });
  line(vma([12,1323,35,1345,60,1355,80,1345,105,1355,150,1358,190,1375,250,1380,290,1370,340,1365,385,1362,408,1330,425,1270,450,1205,480,1185,505,1165,530,1185,550,1225,575,1248,598,1238,645,1265,690,1315,712,1325,737,1305,785,1275,810,1260,832,1260,870,1280,900,1288,945,1248,1018,1247,1065,1300,1113,1325,1160,1350,1207,1350,1230,1240,1255,1125,1280,1060,1325,1035,1350,1130,1385,1260,1415,1302,1500,1300,1565,1310],
    [0,1312,30,1332,60,1340,100,1346,140,1340,240,1342,350,1350,375,1345,400,1305,420,1150,460,1010,505,937,530,1005,560,1045,612,1105,635,1165,657,1197,680,1187,700,1150,725,1137,765,1080,790,1080,815,1125,870,1185,890,1225,950,1270,990,1290,1020,1297,1045,1260,1065,1115,1090,1030,1130,900,1150,878,1172,985,1190,995,1215,1030,1237,1012,1280,1040,1298,880,1322,782,1340,778]), '#d8d800', 1.3);
  line(vma([12,1325,50,1337,130,1337,165,1358,210,1368,300,1368,380,1370,410,1340,440,1295,460,1282,485,1275,530,1258,570,1225,620,1210,640,1225,670,1265,690,1282,760,1275,785,1292,830,1292,870,1282,900,1282,925,1262,950,1255,1020,1265,1090,1278,1140,1288,1160,1312,1207,1332,1240,1240,1290,1198,1390,1175,1440,1170,1480,1250,1510,1295,1565,1310],
    [0,1310,50,1323,90,1323,130,1330,160,1340,300,1337,350,1346,380,1342,400,1315,420,1250,465,1175,490,1150,530,1075,580,1025,612,1022,640,1090,670,1120,700,1115,740,1140,790,1135,850,1142,870,1133,920,1185,980,1235,1020,1268,1040,1265,1060,1190,1110,1115,1150,1070,1210,995,1240,955,1255,955,1280,1010,1300,930,1340,895]), '#e000e0', 1.3);

  [['50000', 882], ['45000', 922], ['40000', 959], ['35000', 1000], ['30000', 1038], ['25000', 1080], ['20000', 1117], ['15000', 1158], ['10000', 1195]].forEach(function (t) {
    text(1727, t[1] + 6.5, t[0], 't-ax-num');
    seg(1711, t[1], 1716, t[1], AX, 1.2);
  });
  rect(1712, 880, 74, 24, 'fill="#0000a0" stroke="' + AX + '" stroke-width="1.2"');
  text(1713, 898, '47070', 't-white');
  rect(1712, 1259, 38, 24, 'fill="#000" stroke="' + AX + '" stroke-width="1.2"');
  text(1714, 1278, 'X10', 't-axis');

  // --- time axis
  seg(0, 1283, 1788, 1283, AX, 1.8);
  seg(0, 1305, 1788, 1305, AX, 1.8);
  text(7, 1302, '2021年', 't-axis');
  [[107, '12'], [403, '1'], [647, '2'], [854, '3'], [1150, '4'], [1393, '5'], [1636, '6']].forEach(function (t) {
    seg(t[0], 1283, t[0], 1305, AX, 1.2);
    text(t[0] + 3, 1302, t[1], 't-axis');
  });
  for (var tx = 180; tx < 1700; tx += 74) seg(tx, 1283, tx, 1287, AX, 1);
  rect(739, 1284, 115, 20.5, 'fill="#0000a0"');
  text(741, 1301, '2022/02/16/三', 't-date');
  text(1731, 1302, '日线', 't-white');

  svg.innerHTML = out.join('');
})();
```
